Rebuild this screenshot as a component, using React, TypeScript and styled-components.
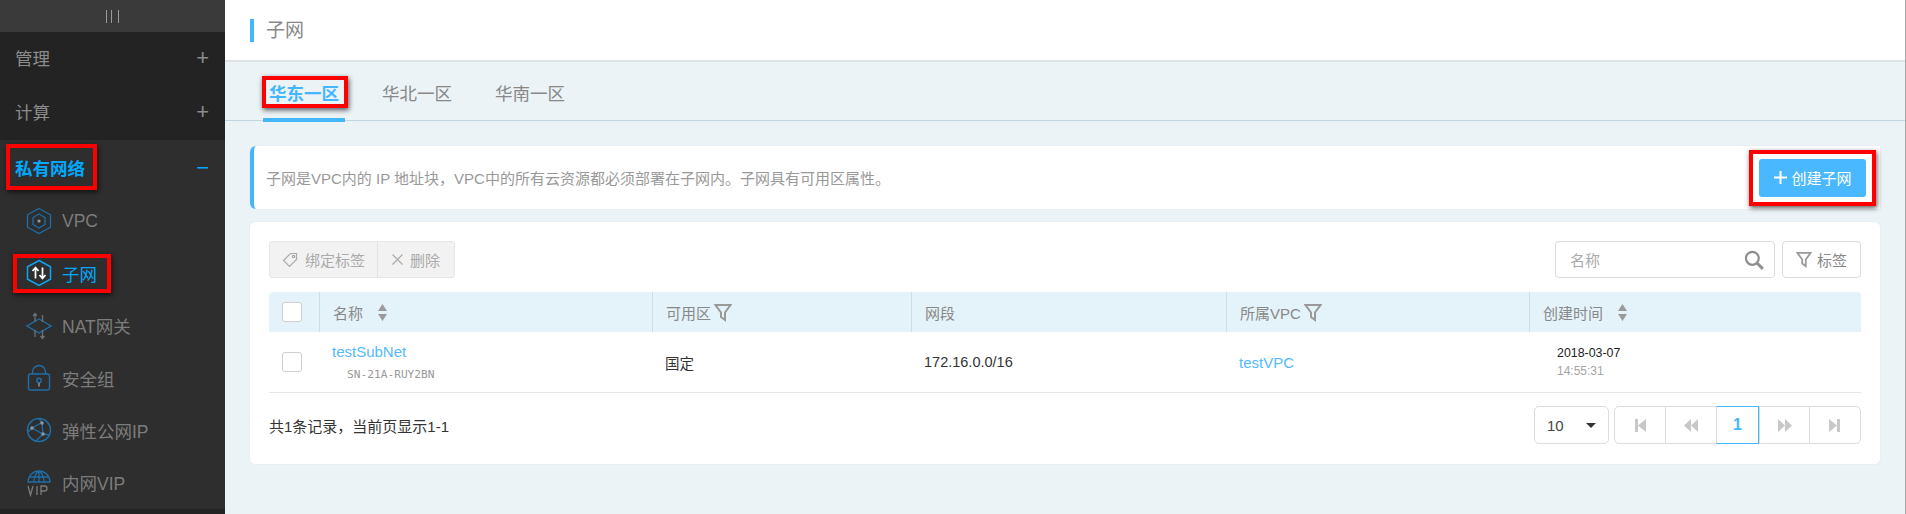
import * as React from "react"
import styled, { createGlobalStyle, css } from "styled-components"

const GlobalStyle = createGlobalStyle`
    html, body {
        margin: 0;
        padding: 0;
        height: 514px;
        overflow: hidden;
    }
    body {
        font-family: "Liberation Sans", "Noto Sans CJK SC", sans-serif;
    }
    * {
        box-sizing: border-box;
    }
`;

const Page = styled.div`
    display: flex;
    width: 1906px;
    height: 514px;
    overflow: hidden;
    border-right: 1px solid #a9a9a9;
`;

/* the red boxes drawn over the screenshot */
const Marked = styled.span<{ $t: number; $r: number; $b: number; $l: number; $gap?: number }>`
    position: relative;
    display: inline-flex;
    align-items: center;
    gap: ${p => p.$gap ?? 0}px;
    &::after {
        content: "";
        position: absolute;
        top: ${p => -p.$t}px;
        right: ${p => -p.$r}px;
        bottom: ${p => -p.$b}px;
        left: ${p => -p.$l}px;
        border: 4px solid #fe0000;
        box-shadow: 1px 2px 5px rgba(0,0,0,0.65);
        pointer-events: none;
    }
`;

const Sidebar = styled.aside`
    flex: 0 0 225px;
    display: flex;
    flex-direction: column;
    background: #232323;
`;

const Collapse = styled.div`
    flex: 0 0 32px;
    background: #3a3a3a;
    display: flex;
    align-items: center;
    justify-content: center;
    span {
        width: 13px;
        height: 13px;
        border-left: 1.5px solid #9a9a9a;
        border-right: 1.5px solid #9a9a9a;
        position: relative;
        &::before {
            content: "";
            position: absolute;
            left: 4px;
            top: 0;
            bottom: 0;
            border-left: 1.5px solid #9a9a9a;
        }
    }
`;

const Group = styled.div`
    flex: 0 0 54px;
    padding: 0 16px 3px 15px;
    display: flex;
    align-items: center;
    justify-content: space-between;
    font-size: 17.5px;
    color: #8c8c8c;
`;

const OpenGroup = styled.div`
    flex: 1;
    background: #2e2e2e;
    display: flex;
    flex-direction: column;
`;

const OpenHead = styled(Group)`
    flex-basis: 55px;
    padding-bottom: 0;
    color: #00a8ff;
    font-weight: 700;
    b {
        color: #00a8ff;
    }
`;

const Sign = styled.b`
    font-size: 22px;
    font-weight: 400;
    color: #8c8c8c;
    line-height: 1;
`;

const SubItem = styled.div<{ $active?: boolean }>`
    flex: 0 0 52.33px;
    padding-left: 26px;
    display: flex;
    align-items: center;
    gap: 10px;
    font-size: 17.5px;
    color: ${p => (p.$active ? "#00a8ff" : "#7c7c7c")};
    svg {
        flex: 0 0 26px;
    }
`;

const SideFoot = styled.div`
    flex: 0 0 5px;
    background: #232323;
`;

const Main = styled.main`
    flex: 1;
    min-width: 0;
    background: #ebf3f7;
    display: flex;
    flex-direction: column;
`;

const TitleBar = styled.header`
    height: 62px;
    background: #fff;
    border-bottom: 2px solid #dfe2e5;
    padding-left: 25px;
    display: flex;
    align-items: center;
`;

const Title = styled.h1`
    margin: 0;
    border-left: 4px solid #44b6ff;
    padding-left: 12px;
    font-size: 19px;
    font-weight: 400;
    line-height: 23px;
    color: #888;
`;

const Tabs = styled.nav`
    height: 59px;
    padding-left: 38px;
    border-bottom: 1px solid #bfd6de;
    display: flex;
    gap: 31px;
`;

const Tab = styled.div<{ $active?: boolean }>`
    width: 82px;
    height: 60px;
    display: flex;
    align-items: center;
    justify-content: center;
    font-size: 17.5px;
    color: #888;
    ${p => p.$active && css`
        color: #44b6ff;
        font-weight: 700;
        border-bottom: 4px solid #44b6ff;
        padding-top: 4px;
    `}
`;

const Content = styled.div`
    padding: 25px 25px 0 25px;
    display: flex;
    flex-direction: column;
    gap: 13px;
`;

const Notice = styled.section`
    height: 63px;
    background: #fff;
    border-left: 4px solid #44b6ff;
    border-radius: 6px 0 0 6px;
    box-shadow: 0 0 2px rgba(0,0,0,0.06);
    padding: 0 14px 0 12px;
    display: flex;
    align-items: center;
    justify-content: space-between;
    font-size: 15px;
    color: #999;
`;

const PrimaryButton = styled.button`
    width: 107px;
    height: 38px;
    border: 0;
    border-radius: 3px;
    background: #4ab8ff;
    color: #fff;
    font: inherit;
    font-size: 15px;
    display: flex;
    align-items: center;
    justify-content: center;
    gap: 3px;
`;

const Card = styled.section`
    height: 242px;
    background: #fff;
    border-radius: 5px;
    box-shadow: 0 0 2px rgba(0,0,0,0.07);
    padding: 19px 19px 0;
`;

const Toolbar = styled.div`
    display: flex;
    justify-content: space-between;
    align-items: center;
    height: 37px;
    margin-bottom: 14px;
`;

const ButtonGroup = styled.div`
    display: flex;
    height: 37px;
    background: #f2f2f2;
    border: 1px solid #e6e6e6;
    border-radius: 3px;
`;

const GroupButton = styled.div<{ $w: number }>`
    width: ${p => p.$w}px;
    display: flex;
    align-items: center;
    justify-content: center;
    gap: 7px;
    font-size: 15px;
    color: #aaa;
    & + & {
        border-left: 1px solid #e2e2e2;
    }
`;

const ToolRight = styled.div`
    display: flex;
    gap: 7px;
`;

const Search = styled.div`
    width: 220px;
    height: 37px;
    border: 1px solid #dcdcdc;
    border-radius: 4px;
    padding: 0 10px 0 14px;
    display: flex;
    align-items: center;
    justify-content: space-between;
    font-size: 15px;
    color: #aaa;
`;

const TagButton = styled.div`
    width: 79px;
    height: 37px;
    border: 1px solid #dcdcdc;
    border-radius: 4px;
    display: flex;
    align-items: center;
    justify-content: center;
    gap: 5px;
    font-size: 15px;
    color: #888;
`;

const columns = "50px 333px 259px 315px 303px 332px";

const HeadRow = styled.div`
    display: grid;
    grid-template-columns: ${columns};
    height: 40px;
    background: #e4f3fa;
    border-radius: 4px 4px 0 0;
    font-size: 15px;
    color: #888;
`;

const HeadCell = styled.div`
    display: flex;
    align-items: center;
    gap: 3px;
    padding-left: 13px;
    & + & {
        border-left: 1px solid #c9dfec;
    }
`;

const BodyRow = styled.div`
    display: grid;
    grid-template-columns: ${columns};
    height: 61px;
    border-bottom: 1px solid #e6e6e6;
    font-size: 14.5px;
    color: #333;
    align-items: center;
`;

const BodyCell = styled.div<{ $pad?: number }>`
    padding-left: ${p => p.$pad ?? 13}px;
    display: flex;
    flex-direction: column;
    align-items: flex-start;
`;

const Check = styled.div`
    width: 20px;
    height: 20px;
    background: #fff;
    border: 1px solid #cfcfcf;
    border-radius: 3px;
`;

const Link = styled.a`
    color: #55b9ff;
    font-size: 15px;
    line-height: 17px;
`;

const SubnetId = styled.span`
    font-family: "DejaVu Sans Mono", monospace;
    font-size: 11.2px;
    color: #999;
    margin: 8px 0 0 15px;
    line-height: 13px;
`;

const DateText = styled.span`
    font-size: 12.4px;
    line-height: 16px;
    color: #222;
`;

const TimeText = styled.span`
    font-size: 12px;
    line-height: 16px;
    color: #a5a5a5;
    margin-top: 2px;
`;

const Footer = styled.div`
    display: flex;
    justify-content: space-between;
    align-items: center;
    height: 38px;
    margin-top: 13px;
    font-size: 15px;
    color: #333;
`;

const Paging = styled.div`
    display: flex;
    gap: 5px;
`;

const PageSize = styled.div`
    width: 75px;
    height: 38px;
    border: 1px solid #dcdcdc;
    border-radius: 5px;
    padding: 0 12px;
    display: flex;
    align-items: center;
    justify-content: space-between;
    font-size: 15px;
    color: #444;
    &::after {
        content: "";
        border: 5px solid transparent;
        border-top: 5px solid #333;
        border-bottom: 0;
    }
`;

const Pager = styled.div`
    display: flex;
    height: 38px;
    width: 247px;
    border: 1px solid #dcdcdc;
    border-radius: 5px;
`;

const PagerCell = styled.div<{ $w: number; $active?: boolean }>`
    width: ${p => p.$w}px;
    display: flex;
    align-items: center;
    justify-content: center;
    & + & {
        border-left: 1px solid #dcdcdc;
    }
    ${p => p.$active && css`
        margin: -1px 0;
        border: 1px solid #44b6ff;
        color: #44b6ff;
        font-weight: 700;
        font-size: 16px;
        & + div {
            border-left: 0;
        }
    `}
`;

const blue = "#1f6ea8";

const HexIcon = () => (
    <svg width="26" height="28" viewBox="0 0 26 28" fill="none" stroke={blue} strokeWidth="1.3">
        <path d="M13 1.5 24.5 7.8v12.4L13 26.5 1.5 20.2V7.8Z" />
        <path d="M13 7 19 10.5v7L13 21 7 17.5v-7Z" />
        <circle cx="13" cy="14" r="1.6" fill="#8d9aa5" stroke="none" />
    </svg>
);

const SubnetIcon = () => (
    <svg width="26" height="28" viewBox="0 0 26 28" fill="none">
        <path d="M13 1.5 24.5 7.8v12.4L13 26.5 1.5 20.2V7.8Z" stroke="#0ea5f2" strokeWidth="1.5" />
        <path d="M9.5 19.5V9M6.5 12 9.5 8.5 12.5 12" stroke="#fff" strokeWidth="1.7" />
        <path d="M16.5 8.5V19M13.5 16 16.5 19.5 19.5 16" stroke="#fff" strokeWidth="1.7" />
    </svg>
);

const NatIcon = () => (
    <svg width="26" height="28" viewBox="0 0 26 28" fill="none" stroke={blue} strokeWidth="1.3">
        <path d="M13 7 25 14 13 21 1 14Z" />
        <path d="M9 10V2M7 4 9 1.5 11 4M16.5 10V3" stroke="#6b7278" />
        <path d="M9 18v7M16.5 18v8M14.5 24l2 2.5 2-2.5" stroke="#6b7278" />
    </svg>
);

const LockIcon = () => (
    <svg width="26" height="28" viewBox="0 0 26 28" fill="none" stroke={blue} strokeWidth="1.4">
        <rect x="2.5" y="10" width="21" height="16" rx="2" />
        <path d="M6.5 10V8a6.5 6.5 0 0 1 13 0v2" />
        <circle cx="13" cy="16.5" r="2.3" />
        <path d="M13 19v3.5" stroke="#8d9aa5" />
    </svg>
);

const GlobeIcon = () => (
    <svg width="26" height="28" viewBox="0 0 26 28" fill="none" stroke={blue} strokeWidth="1.3">
        <circle cx="13" cy="14" r="11.5" strokeWidth="1.5" />
        <path d="M6 12 16 6.5 17 18 6 12ZM17 18 10 25M17 18 24 19M16 6.5 13 2.5M6 12 2 16" />
        <circle cx="6" cy="12" r="1.7" fill="#8d9aa5" stroke="none" />
        <circle cx="16" cy="7" r="1.7" fill="#8d9aa5" stroke="none" />
        <circle cx="17" cy="18" r="1.7" fill="#8d9aa5" stroke="none" />
    </svg>
);

const VipIcon = () => (
    <svg width="26" height="28" viewBox="0 0 26 28" fill="none" stroke={blue} strokeWidth="1.3">
        <path d="M2 13a11 11 0 0 1 22 0ZM13 2v11M13 2C9 5 8 9 8 13M13 2c4 3 5 7 5 11M3.5 8h19" />
        <path d="M2 17 4.5 26 7 17M11 17v9M15 26v-9h3.5a2.4 2.4 0 0 1 0 5H15" stroke="#7c7c7c" />
    </svg>
);

const FunnelIcon = ({ size = 18 }: { size?: number }) => (
    <svg width={size} height={size + 1} viewBox="0 0 18 19" fill="none" stroke="#999" strokeWidth="2">
        <path d="M1.5 2h15L11 9.5V17L7 14V9.5Z" />
    </svg>
);

const SortIcon = () => (
    <svg width="9" height="17" viewBox="0 0 9 17" fill="#9a9a9a" style={{ marginLeft: 12 }}>
        <path d="M4.5 0 9 7H0ZM0 10h9l-4.5 7Z" />
    </svg>
);

const PagerGlyph = ({ d }: { d: string }) => (
    <svg width="14" height="15" viewBox="0 0 14 15" fill="#c8c8c8">
        <path d={d} />
    </svg>
);

const subItems = [
    { icon: <NatIcon />, label: "NAT网关" },
    { icon: <LockIcon />, label: "安全组" },
    { icon: <GlobeIcon />, label: "弹性公网IP" },
    { icon: <VipIcon />, label: "内网VIP" },
];

const App = () => {
    return (
        <Page>
            <GlobalStyle />
            <Sidebar>
                <Collapse><span /></Collapse>
                <Group>管理<Sign>+</Sign></Group>
                <Group>计算<Sign>+</Sign></Group>
                <OpenGroup>
                    <OpenHead>
                        <Marked $t={11} $r={12} $b={10} $l={9}>私有网络</Marked>
                        <Sign>−</Sign>
                    </OpenHead>
                    <SubItem><HexIcon />VPC</SubItem>
                    <SubItem $active>
                        <Marked $t={5} $r={14} $b={6} $l={13} $gap={10}><SubnetIcon />子网</Marked>
                    </SubItem>
                    {subItems.map(item => (
                        <SubItem key={item.label}>{item.icon}{item.label}</SubItem>
                    ))}
                </OpenGroup>
                <SideFoot />
            </Sidebar>
            <Main>
                <TitleBar><Title>子网</Title></TitleBar>
                <Tabs>
                    <Tab $active>
                        <Marked $t={4} $r={9} $b={3} $l={7}>华东一区</Marked>
                    </Tab>
                    <Tab>华北一区</Tab>
                    <Tab>华南一区</Tab>
                </Tabs>
                <Content>
                    <Notice>
                        子网是VPC内的 IP 地址块，VPC中的所有云资源都必须部署在子网内。子网具有可用区属性。
                        <Marked $t={9} $r={10} $b={9} $l={10}>
                            <PrimaryButton>
                                <svg width="15" height="15" viewBox="0 0 15 15" stroke="#fff" strokeWidth="2">
                                    <path d="M7.5 1v13M1 7.5h13" />
                                </svg>
                                创建子网
                            </PrimaryButton>
                        </Marked>
                    </Notice>
                    <Card>
                        <Toolbar>
                            <ButtonGroup>
                                <GroupButton $w={107}>
                                    <svg width="16" height="16" viewBox="0 0 16 16" fill="none" stroke="#aaa" strokeWidth="1.2">
                                        <path d="M1.5 8.5 8.5 1.5H14.5V7.5L7.5 14.5Z" />
                                        <circle cx="11.5" cy="4.5" r="1.2" />
                                    </svg>
                                    绑定标签
                                </GroupButton>
                                <GroupButton $w={77}>
                                    <svg width="11" height="11" viewBox="0 0 11 11" stroke="#aaa" strokeWidth="1.2">
                                        <path d="M.5.5l10 10M10.5.5l-10 10" />
                                    </svg>
                                    删除
                                </GroupButton>
                            </ButtonGroup>
                            <ToolRight>
                                <Search>
                                    名称
                                    <svg width="20" height="20" viewBox="0 0 18 18" fill="none" stroke="#8f8f8f" strokeWidth="2">
                                        <circle cx="7.5" cy="7.5" r="5.8" />
                                        <path d="M11.8 11.8 17 17" strokeWidth="2.6" />
                                    </svg>
                                </Search>
                                <TagButton><FunnelIcon size={16} />标签</TagButton>
                            </ToolRight>
                        </Toolbar>
                        <HeadRow>
                            <HeadCell><Check /></HeadCell>
                            <HeadCell>名称<SortIcon /></HeadCell>
                            <HeadCell>可用区<FunnelIcon /></HeadCell>
                            <HeadCell>网段</HeadCell>
                            <HeadCell>所属VPC<FunnelIcon /></HeadCell>
                            <HeadCell>创建时间<SortIcon /></HeadCell>
                        </HeadRow>
                        <BodyRow>
                            <BodyCell><Check /></BodyCell>
                            <BodyCell>
                                <Link>testSubNet</Link>
                                <SubnetId>SN-21A-RUY2BN</SubnetId>
                            </BodyCell>
                            <BodyCell>国定</BodyCell>
                            <BodyCell>172.16.0.0/16</BodyCell>
                            <BodyCell><Link>testVPC</Link></BodyCell>
                            <BodyCell $pad={28}>
                                <DateText>2018-03-07</DateText>
                                <TimeText>14:55:31</TimeText>
                            </BodyCell>
                        </BodyRow>
                        <Footer>
                            共1条记录，当前页显示1-1
                            <Paging>
                                <PageSize>10</PageSize>
                                <Pager>
                                    <PagerCell $w={50}><PagerGlyph d="M2 1h3v13H2ZM13 1v13L5 7.5Z" /></PagerCell>
                                    <PagerCell $w={51}><PagerGlyph d="M7 1v13L0 7.5ZM14 1v13L7 7.5Z" /></PagerCell>
                                    <PagerCell $w={43} $active>1</PagerCell>
                                    <PagerCell $w={50}><PagerGlyph d="M0 1v13l7-6.5ZM7 1v13l7-6.5Z" /></PagerCell>
                                    <PagerCell $w={51}><PagerGlyph d="M1 1v13l8-6.5ZM9 1h3v13H9Z" /></PagerCell>
                                </Pager>
                            </Paging>
                        </Footer>
                    </Card>
                </Content>
            </Main>
        </Page>
    )
}

export default App;
